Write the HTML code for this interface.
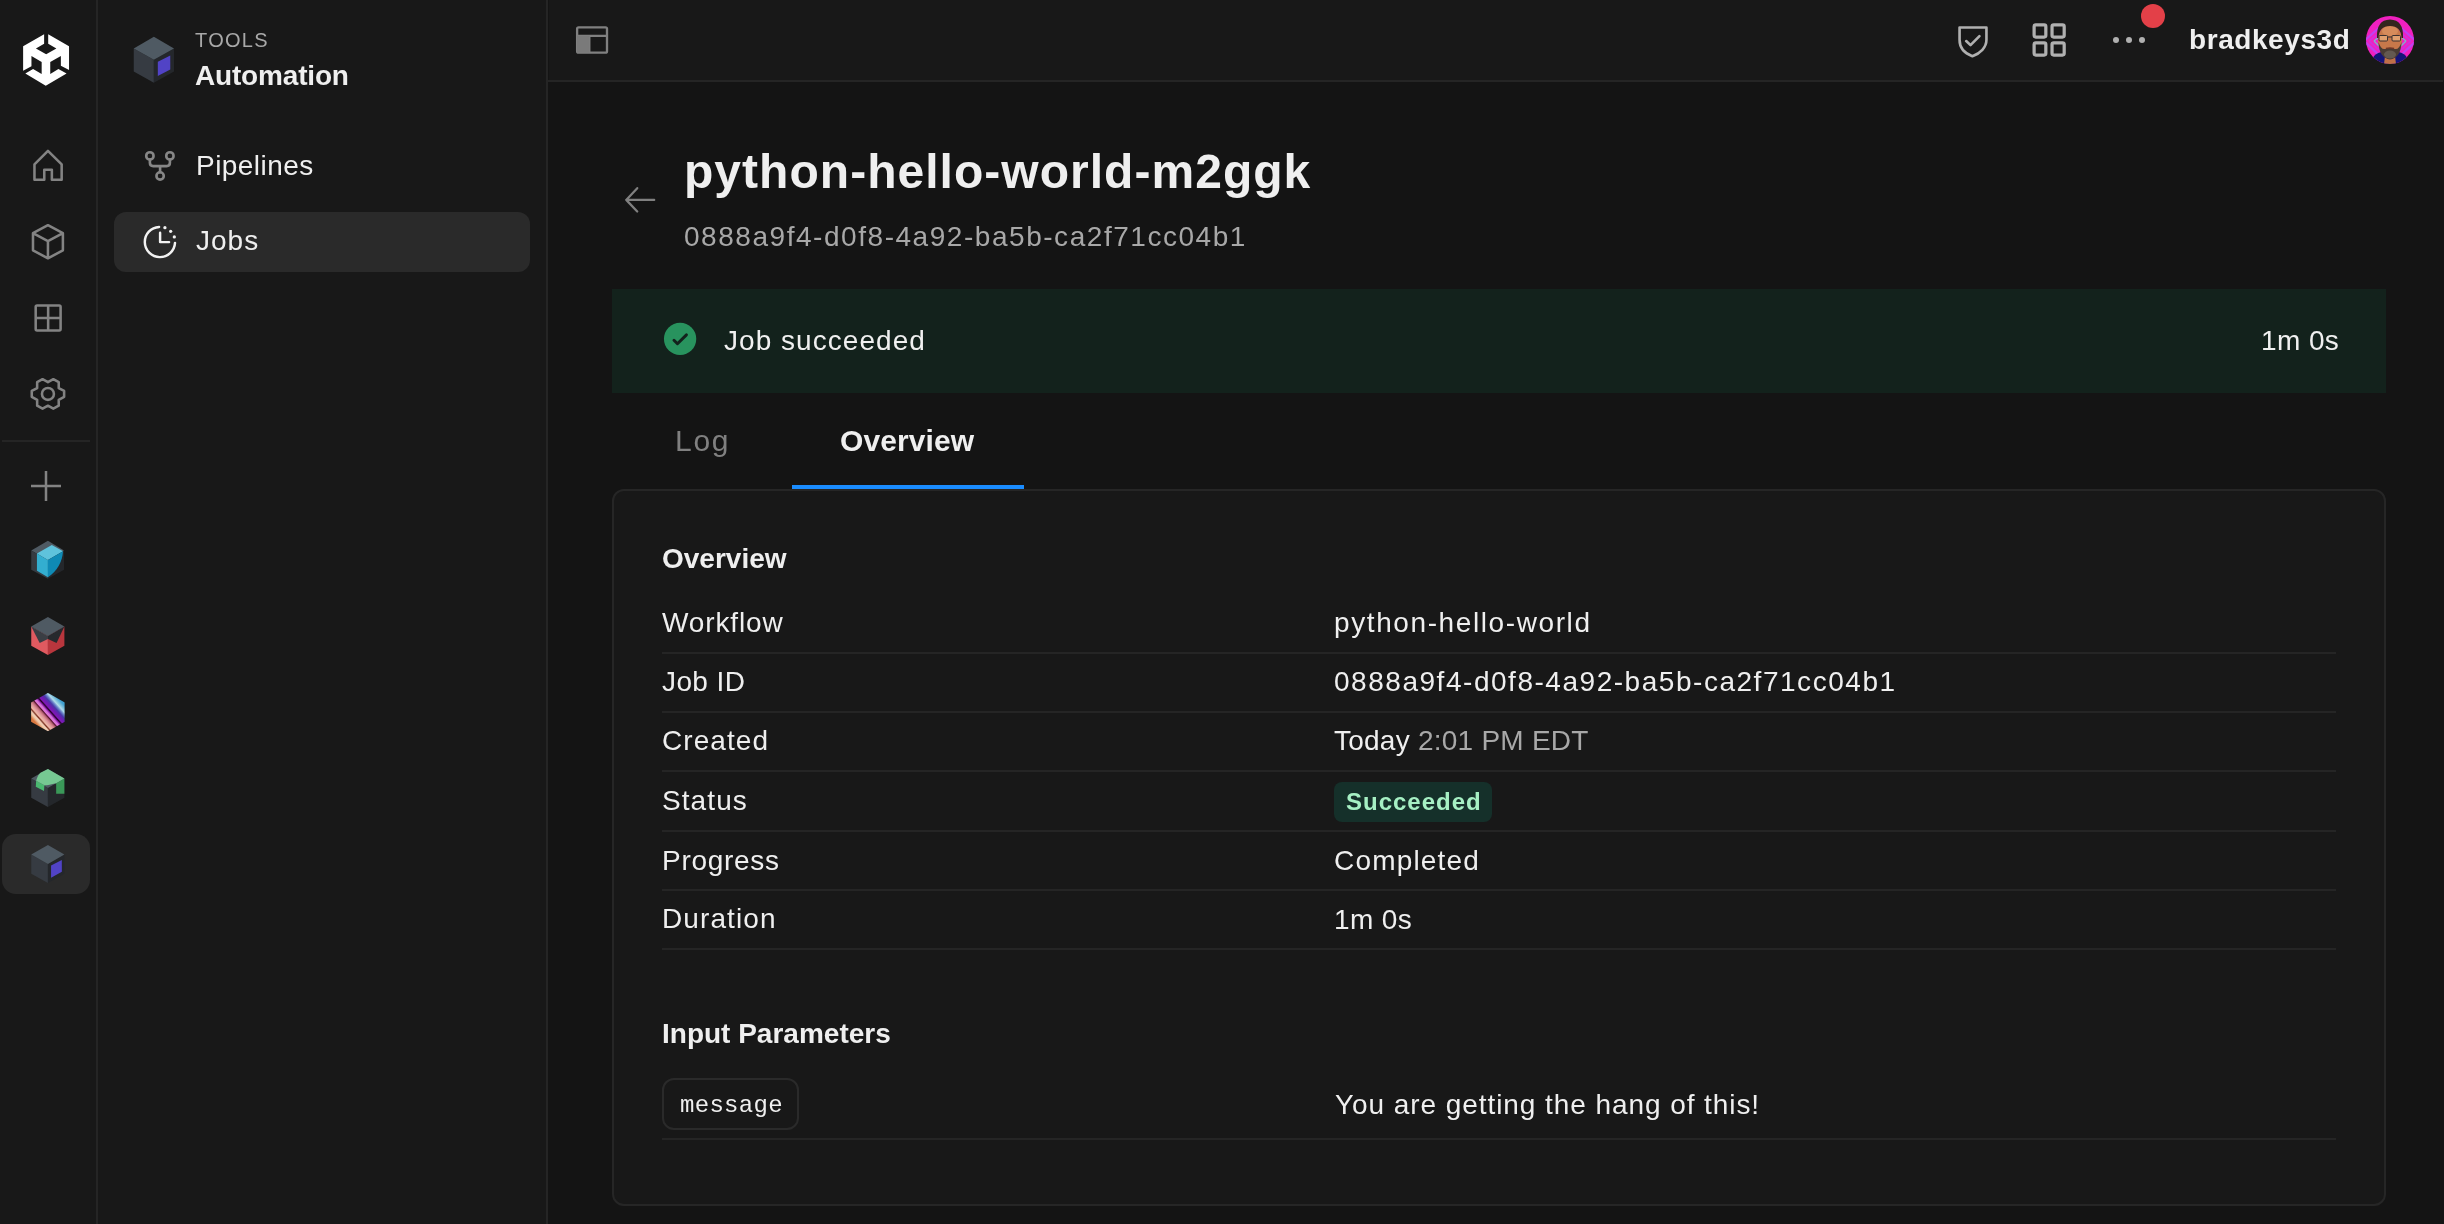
<!DOCTYPE html>
<html><head><meta charset="utf-8">
<style>
*{margin:0;padding:0;box-sizing:border-box}
html,body{width:2444px;height:1224px;overflow:hidden;background:#141414;font-family:"Liberation Sans",sans-serif;color:#efefef}
.a{position:absolute}
.t{position:absolute;white-space:nowrap;line-height:1;will-change:transform}
#rail{left:0;top:0;width:96px;height:1224px;background:#181818}
#rail-b{left:96px;top:0;width:2px;height:1224px;background:#252525}
#side{left:98px;top:0;width:449px;height:1224px;background:#181818}
#side-b{left:546px;top:0;width:2px;height:1224px;background:#252525}
#head{left:549px;top:0;width:1895px;height:81px;background:#181818}
#head-b{left:548px;top:80px;width:1895px;height:2px;background:#252525}
svg{position:absolute;overflow:visible}
</style></head><body>
<div id="rail" class="a"></div>
<div id="rail-b" class="a"></div>
<div id="side" class="a"></div>
<div id="side-b" class="a"></div>
<div id="head" class="a"></div>
<div id="head-b" class="a"></div>

<!-- Unity logo -->
<svg style="left:0;top:20px;width:100px;height:100px" viewBox="0 0 1224 1224">
<path fill="#ffffff" d="M283,322 L540,175 L540,290 L440,348 L565,420 L690,348 L590,290 L590,175 L845,322 L845,612 L745,560 L745,440 L615,515 L615,660 L715,600 L815,655 L560,805 L310,655 L405,600 L510,660 L510,515 L385,440 L385,565 L283,620 Z"/>
</svg>


<!-- rail icons -->
<svg style="left:20px;top:135px;width:60px;height:60px" viewBox="0 0 1224 1224" fill="none" stroke="#838383" stroke-width="52" stroke-linejoin="round">
<path d="M295,600 L570,322 L850,600 L850,912 L650,912 L650,710 L495,710 L495,912 L295,912 Z"/>
</svg>
<svg style="left:20px;top:212px;width:60px;height:60px" viewBox="0 0 1224 1224" fill="none" stroke="#838383" stroke-width="52" stroke-linejoin="round">
<path d="M570,270 L875,432 L875,782 L570,945 L265,782 L265,432 Z M265,432 L570,594 L875,432 M570,594 L570,945"/>
</svg>
<svg style="left:20px;top:288px;width:60px;height:60px" viewBox="0 0 1224 1224" fill="none" stroke="#838383" stroke-width="52" stroke-linejoin="round">
<rect x="320" y="357" width="508" height="508" rx="28"/>
<path d="M574,357 L574,865 M320,611 L828,611"/>
</svg>
<svg style="left:20px;top:364px;width:60px;height:60px" viewBox="0 0 1224 1224" fill="none" stroke="#838383" stroke-width="52" stroke-linejoin="round">
<path d="M570,370 L680,310 L790,370 L790,490 L900,550 L900,670 L790,730 L790,850 L680,910 L570,850 L460,910 L350,850 L350,730 L240,670 L240,550 L350,490 L350,370 L460,310 Z"/>
<circle cx="570" cy="610" r="122"/>
</svg>
<div class="a" style="left:2px;top:440px;width:88px;height:2px;background:#252525"></div>
<svg style="left:20px;top:455px;width:60px;height:60px" viewBox="0 0 60 60" fill="none" stroke="#838383" stroke-width="2.5">
<path d="M11,31 L41,31 M26,16 L26,46"/>
</svg>

<!-- blue cube -->
<svg style="left:24px;top:534px;width:48px;height:48px" viewBox="0 0 1224 1224">
<path fill="#4f5a63" d="M610,175 L1020,420 L610,660 L185,420 Z"/>
<path fill="#363b42" d="M185,420 L610,660 L610,1140 L185,910 Z"/>
<path fill="#24272b" d="M1020,420 L610,660 L610,1140 L1020,910 Z"/>
<path fill="#5fc3dc" d="M330,500 L710,280 L995,440 L610,660 Z"/>
<path fill="#33aed0" d="M330,500 L610,660 L610,1100 L330,940 Z"/>
<path fill="#0f8ab5" d="M610,660 L995,440 C980,700 850,950 610,1100 Z"/>
</svg>
<!-- red cube -->
<svg style="left:24px;top:612px;width:48px;height:48px" viewBox="0 0 1224 1224">
<path fill="#e05a60" d="M185,370 L610,610 L610,1095 L185,860 Z"/>
<path fill="#b8363d" d="M1030,370 L610,610 L610,1095 L1030,860 Z"/>
<path fill="#3a3e44" d="M185,370 L610,610 L610,690 L400,790 Z"/>
<path fill="#26292d" d="M1030,370 L610,610 L610,690 L830,790 Z"/>
<path fill="#4f5a63" d="M610,125 L1030,370 L610,610 L185,370 Z"/>
</svg>
<!-- striped hex -->
<svg style="left:24px;top:688px;width:48px;height:48px" viewBox="0 0 1224 1224">
<defs>
<linearGradient id="strp" x1="300" y1="890" x2="930" y2="330" gradientUnits="userSpaceOnUse">
<stop offset="0" stop-color="#d87840"/>
<stop offset="0.08" stop-color="#f0c8a8"/>
<stop offset="0.13" stop-color="#f0d0b8"/>
<stop offset="0.17" stop-color="#7a3020"/>
<stop offset="0.21" stop-color="#f0b8a8"/>
<stop offset="0.27" stop-color="#e0a0a0"/>
<stop offset="0.31" stop-color="#d88890"/>
<stop offset="0.36" stop-color="#b06070"/>
<stop offset="0.40" stop-color="#501028"/>
<stop offset="0.43" stop-color="#e078d8"/>
<stop offset="0.48" stop-color="#d070d8"/>
<stop offset="0.52" stop-color="#9020b0"/>
<stop offset="0.56" stop-color="#200020"/>
<stop offset="0.60" stop-color="#8018b8"/>
<stop offset="0.68" stop-color="#6820b0"/>
<stop offset="0.74" stop-color="#4838a8"/>
<stop offset="0.80" stop-color="#6880c8"/>
<stop offset="0.86" stop-color="#b0dcea"/>
<stop offset="0.94" stop-color="#70b8d8"/>
<stop offset="1" stop-color="#40a0d0"/>
</linearGradient>
<clipPath id="hexc"><path d="M610,125 L1040,370 L1040,860 L610,1100 L180,860 L180,370 Z"/></clipPath>
</defs>
<g clip-path="url(#hexc)">
<rect x="0" y="0" width="1224" height="1224" fill="url(#strp)"/>
</g>
</svg>
<!-- green cube -->
<svg style="left:24px;top:764px;width:48px;height:48px" viewBox="0 0 1224 1224">
<path fill="#363b42" d="M185,370 L610,610 L610,1095 L185,860 Z"/>
<path fill="#24272b" d="M1030,370 L610,610 L610,1095 L1030,860 Z"/>
<path fill="#4f5a63" d="M610,125 L1030,370 L610,610 L185,370 Z"/>
<path fill="#4ab870" d="M310,430 L520,540 L510,690 L300,580 Z"/>
<path fill="#3a9858" d="M820,490 L1030,370 L1030,760 L820,760 Z"/>
<path fill="#76c892" d="M610,125 L1030,370 L820,490 C700,520 600,540 520,545 L310,430 C330,330 380,250 420,220 Z"/>
</svg>
<!-- active rail pill -->
<div class="a" style="left:2px;top:834px;width:88px;height:60px;border-radius:14px;background:#2a2a2a"></div>
<svg style="left:24px;top:840px;width:48px;height:48px" viewBox="0 0 1224 1224">
<path fill="#363b42" d="M185,370 L610,610 L610,1095 L185,860 Z"/>
<path fill="#24272b" d="M1030,370 L610,610 L610,1095 L1030,860 Z"/>
<path fill="#4f5a63" d="M610,125 L1030,370 L610,610 L185,370 Z"/>
<path fill="#5143c6" d="M690,650 L965,510 L965,810 L690,960 Z"/>
</svg>

<!-- sidebar -->
<svg style="left:120px;top:20px;width:240px;height:90px" viewBox="0 0 2444 916">
<path fill="#363b42" d="M140,290 L345,405 L345,640 L140,525 Z"/>
<path fill="#24272b" d="M550,290 L345,405 L345,640 L550,525 Z"/>
<path fill="#4f5a63" d="M345,170 L550,290 L345,405 L140,290 Z"/>
<path fill="#5143c6" d="M385,425 L512,360 L512,505 L385,570 Z"/>
</svg>
<div class="t" style="left:195px;top:30px;font-size:20px;letter-spacing:1.3px;color:#a8a8a8">TOOLS</div>
<div class="t" style="left:195px;top:62px;font-size:28px;font-weight:700;color:#efefef;letter-spacing:-0.18px">Automation</div>

<svg style="left:136px;top:142px;width:50px;height:50px" viewBox="0 0 1224 1224" fill="none" stroke="#868686" stroke-width="64" stroke-linecap="round" stroke-linejoin="round">
<circle cx="340" cy="340" r="90"/><circle cx="830" cy="340" r="90"/><circle cx="590" cy="832" r="90"/>
<path d="M340,430 L340,510 Q340,590 420,590 L750,590 Q830,590 830,510 L830,430 M590,590 L590,742"/>
</svg>
<div class="t" style="left:196px;top:151.7px;font-size:28px;color:#efefef;letter-spacing:0.45px">Pipelines</div>
<div class="a" style="left:114px;top:212px;width:416px;height:60px;border-radius:12px;background:#2a2a2a"></div>
<svg style="left:136px;top:218px;width:50px;height:50px" viewBox="0 0 1224 1224" fill="none" stroke="#f2f2f2" stroke-width="60" stroke-linecap="round" stroke-linejoin="round">
<path d="M565,218 A370,370 0 1 0 955,610"/>
<path d="M590,360 L590,590 L810,590"/>
<circle cx="708" cy="236" r="40" fill="#f2f2f2" stroke="none"/><circle cx="848" cy="326" r="40" fill="#f2f2f2" stroke="none"/><circle cx="938" cy="464" r="40" fill="#f2f2f2" stroke="none"/>
</svg>
<div class="t" style="left:196px;top:227px;font-size:28px;color:#efefef;letter-spacing:1px">Jobs</div>

<!-- header -->
<svg style="left:566px;top:14px;width:52px;height:52px" viewBox="0 0 1224 1224" fill="none" stroke="#808080" stroke-width="55" stroke-linejoin="round">
<rect x="262" y="315" width="703" height="595" rx="35"/>
<path d="M262,515 L965,515 M548,515 L548,910"/>
<path fill="#7a7a7a" stroke="none" d="M262,515 L548,515 L548,910 L262,910 Z"/>
</svg>
<svg style="left:1948px;top:16px;width:52px;height:52px" viewBox="0 0 1224 1224" fill="none" stroke="#b0b0b0" stroke-width="62" stroke-linecap="round" stroke-linejoin="round">
<path d="M272,272 L905,272 L905,560 C905,740 760,880 575,945 C390,880 272,740 272,560 Z"/>
<path d="M428,590 L530,685 L740,475"/>
</svg>
<svg style="left:2024px;top:14px;width:52px;height:52px" viewBox="0 0 1224 1224" fill="none" stroke="#b0b0b0" stroke-width="76" stroke-linejoin="round">
<rect x="238" y="258" width="276" height="284" rx="40"/>
<rect x="660" y="258" width="286" height="284" rx="40"/>
<rect x="238" y="680" width="276" height="286" rx="40"/>
<rect x="660" y="680" width="286" height="286" rx="40"/>
</svg>
<div class="a" style="left:2113px;top:37px;width:6.4px;height:6.4px;border-radius:50%;background:#b0b0b0"></div>
<div class="a" style="left:2125.7px;top:37px;width:6.4px;height:6.4px;border-radius:50%;background:#b0b0b0"></div>
<div class="a" style="left:2138.6px;top:37px;width:6.4px;height:6.4px;border-radius:50%;background:#b0b0b0"></div>
<div class="a" style="left:2141px;top:4px;width:24px;height:24px;border-radius:50%;background:#e34048"></div>
<div class="t" style="left:2189px;top:25.7px;font-size:28px;font-weight:700;color:#efefef;letter-spacing:0.57px">bradkeys3d</div>
<svg style="left:2366px;top:16px;width:48px;height:48px" viewBox="0 0 48 48">
<defs><clipPath id="avc"><circle cx="24" cy="24" r="24"/></clipPath></defs>
<g clip-path="url(#avc)">
<rect width="48" height="48" fill="#f020c0"/>
<path d="M-2,25 L14,11 M-2,25 L14,40 M50,25 L34,11 M50,25 L34,40" stroke="#c040f0" stroke-width="2.2" fill="none"/>
<path d="M3,25 L14,16 M3,25 L14,35 M45,25 L34,16 M45,25 L34,35" stroke="#d030e0" stroke-width="1.6" fill="none"/>
<path d="M8,25 L13,21 M8,25 L13,30 M40,25 L35,21 M40,25 L35,30" stroke="#80b0d0" stroke-width="1.4" fill="none"/>
<path d="M4,48 L8,40 Q12,36 17,36 L31,36 Q36,36 40,40 L44,48 Z" fill="#141478"/>
<path d="M19,40 L29,40 L30,48 L18,48 Z" fill="#c07048"/>
<ellipse cx="24" cy="24" rx="12" ry="15.5" fill="#c8784a"/>
<ellipse cx="24" cy="15" rx="8" ry="5" fill="#e09868" opacity="0.6"/>
<path d="M11,22 Q10,4 24,3.5 Q38,4 37,22 L35.5,22 Q35,10 24,10 Q13,10 12.5,22 Z" fill="#33261e"/>
<path d="M12.5,26 Q13,42 24,43.5 Q35,42 35.5,26 Q33,34 29,33 Q24,31 19,33 Q15,34 12.5,26 Z" fill="#4a3c34"/>
<ellipse cx="24" cy="38.5" rx="6" ry="4" fill="#6a6058" opacity="0.8"/>
<path d="M20,32.5 Q24,31.5 28,32.5" stroke="#703828" stroke-width="1.4" fill="none"/>
<rect x="13" y="19.5" width="8.5" height="5.5" rx="1" fill="#e0a070" stroke="#3a3030" stroke-width="1"/>
<rect x="26" y="19.5" width="8.5" height="5.5" rx="1" fill="#e0a070" stroke="#3a3030" stroke-width="1"/>
<path d="M21.5,21 L26,21" stroke="#3a3030" stroke-width="1"/>
</g>
</svg>

<!-- page title -->
<svg style="left:616px;top:176px;width:50px;height:50px" viewBox="0 0 1224 1224" fill="none" stroke="#808080" stroke-width="55" stroke-linecap="round" stroke-linejoin="round">
<path d="M935,585 L250,585 M520,298 L250,585 L520,868"/>
</svg>
<div class="t" style="left:684px;top:148.4px;font-size:48px;font-weight:700;color:#efefef;letter-spacing:1.03px">python-hello-world-m2ggk</div>
<div class="t" style="left:684px;top:222.7px;font-size:28px;color:#a8a8a8;letter-spacing:1.54px">0888a9f4-d0f8-4a92-ba5b-ca2f71cc04b1</div>

<!-- banner -->
<div class="a" style="left:612px;top:289px;width:1774px;height:104px;background:#13221c"></div>
<svg style="left:656px;top:314px;width:50px;height:50px" viewBox="0 0 1224 1224">
<circle cx="590" cy="610" r="395" fill="#28935e"/>
<path d="M440,642 L525,728 L745,510" fill="none" stroke="#13221c" stroke-width="72" stroke-linecap="round" stroke-linejoin="round"/>
</svg>
<div class="t" style="left:724px;top:327px;font-size:28px;color:#f0f0f0;letter-spacing:1.04px">Job succeeded</div>
<div class="t" style="left:2260.5px;top:327.3px;font-size:28px;color:#f0f0f0;letter-spacing:0.4px">1m 0s</div>

<!-- tabs -->
<div class="t" style="left:675px;top:426.1px;font-size:30px;color:#808080;letter-spacing:1.7px">Log</div>
<div class="t" style="left:840px;top:426.1px;font-size:30px;font-weight:700;color:#efefef;letter-spacing:0.1px">Overview</div>

<!-- card -->
<div class="a" style="left:612px;top:489px;width:1774px;height:717px;background:#181818;border:2px solid #262626;border-radius:12px"></div>
<div class="a" style="left:792px;top:485px;width:232px;height:4px;background:#1a8cff"></div>

<div class="t" style="left:662px;top:545.4px;font-size:28px;font-weight:700;color:#efefef">Overview</div>

<div class="t" style="left:662px;top:609.1px;font-size:28px;color:#efefef;letter-spacing:0.87px">Workflow</div>
<div class="t" style="left:1333.5px;top:608.7px;font-size:28px;color:#efefef;letter-spacing:1.6px">python-hello-world</div>
<div class="a" style="left:662px;top:652px;width:1674px;height:2px;background:#252525"></div>

<div class="t" style="left:662px;top:668.1px;font-size:28px;color:#efefef;letter-spacing:0.4px">Job ID</div>
<div class="t" style="left:1334px;top:668.3px;font-size:28px;color:#efefef;letter-spacing:1.53px">0888a9f4-d0f8-4a92-ba5b-ca2f71cc04b1</div>
<div class="a" style="left:662px;top:711px;width:1674px;height:2px;background:#252525"></div>

<div class="t" style="left:662px;top:727.3px;font-size:28px;color:#efefef;letter-spacing:1.08px">Created</div>
<div class="t" style="left:1334px;top:727.3px;font-size:28px;color:#efefef;letter-spacing:0.24px">Today <span style="color:#a8a8a8">2:01 PM EDT</span></div>
<div class="a" style="left:662px;top:770px;width:1674px;height:2px;background:#252525"></div>

<div class="t" style="left:662px;top:786.5px;font-size:28px;color:#efefef;letter-spacing:1.08px">Status</div>
<div class="a" style="left:1334px;top:782px;width:158px;height:40px;border-radius:8px;background:#15302a"></div>
<div class="t" style="left:1346px;top:789.7px;font-size:24px;font-weight:700;color:#a6f0c4;letter-spacing:1.0px">Succeeded</div>
<div class="a" style="left:662px;top:830px;width:1674px;height:2px;background:#252525"></div>

<div class="t" style="left:662px;top:846.7px;font-size:28px;color:#efefef;letter-spacing:0.7px">Progress</div>
<div class="t" style="left:1334px;top:847.3px;font-size:28px;color:#efefef;letter-spacing:1.175px">Completed</div>
<div class="a" style="left:662px;top:889px;width:1674px;height:2px;background:#252525"></div>

<div class="t" style="left:662px;top:904.9px;font-size:28px;color:#efefef;letter-spacing:1.09px">Duration</div>
<div class="t" style="left:1334px;top:905.7px;font-size:28px;color:#efefef;letter-spacing:0.375px">1m 0s</div>
<div class="a" style="left:662px;top:948px;width:1674px;height:2px;background:#252525"></div>

<div class="t" style="left:662px;top:1020.4px;font-size:28px;font-weight:700;color:#efefef">Input Parameters</div>
<div class="a" style="left:662px;top:1078px;width:137px;height:52px;border-radius:12px;border:2px solid #2a2a2a"></div>
<div class="t" style="left:679.5px;top:1093.7px;font-size:24px;font-family:'Liberation Mono',monospace;color:#efefef;letter-spacing:0.3px">message</div>
<div class="t" style="left:1335.2px;top:1090.5px;font-size:28px;color:#efefef;letter-spacing:0.93px">You are getting the hang of this!</div>
<div class="a" style="left:662px;top:1138px;width:1674px;height:2px;background:#252525"></div>

</body></html>
